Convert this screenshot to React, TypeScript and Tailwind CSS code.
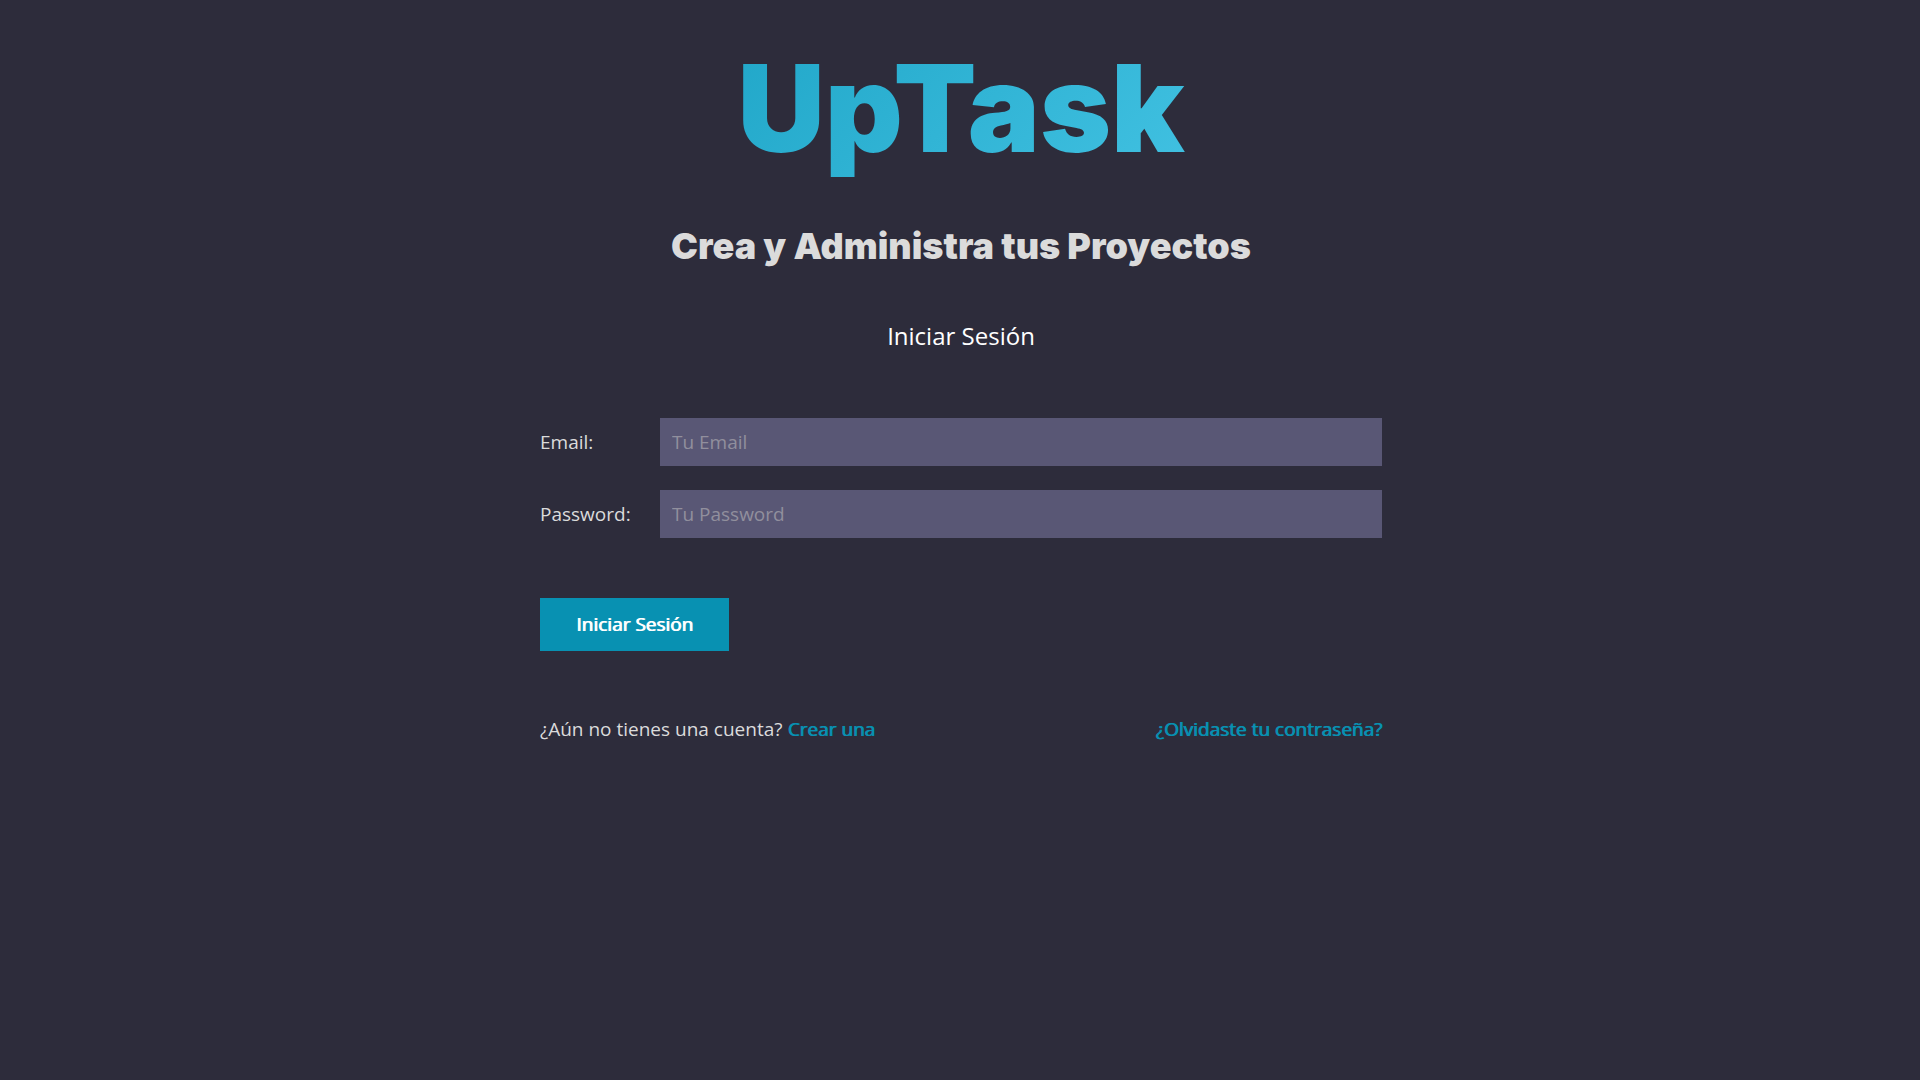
const linkStyle = "text-[#0891b2] [text-shadow:1px_0_currentColor]";

const fields = [
  { id: "email", type: "email", label: "Email:", placeholder: "Tu Email" },
  { id: "password", type: "password", label: "Password:", placeholder: "Tu Password" },
];

export default function App() {
  return (
    <div className="min-h-screen bg-[#2d2c3b] pl-0.5 font-['Open_Sans',sans-serif] text-base text-[#dbdbdb]">
      <main className="mx-auto w-full max-w-[842px] pt-12">
        <header className="text-center font-['Inter',sans-serif] font-black">
          <h1 className="bg-linear-[135deg] from-[#179fc1] to-[#4ccaea] bg-clip-text pb-6 text-[121px] leading-[120px] text-transparent">
            UpTask
          </h1>
          <p className="mt-6 text-4xl leading-[60px]">Crea y Administra tus Proyectos</p>
        </header>
        <p className="mt-10 text-center text-2xl leading-10 text-white">Iniciar Sesión</p>
        <form className="mt-[62px] text-[19px]">
          <div className="flex flex-col gap-6">
            {fields.map((f) => (
              <div key={f.id} className="flex items-center">
                <label htmlFor={f.id} className="w-[120px] shrink-0">
                  {f.label}
                </label>
                <input
                  id={f.id}
                  type={f.type}
                  placeholder={f.placeholder}
                  className="h-12 min-w-0 flex-1 bg-[#595775] px-3 placeholder:text-[#918f9d]"
                />
              </div>
            ))}
          </div>
          <button type="submit" className="mt-15 h-[53px] bg-[#0891b2] px-9 text-white [text-shadow:1px_0_currentColor]">
            Iniciar Sesión
          </button>
        </form>
        <div className="mt-16 flex justify-between text-[19px]">
          <p>
            ¿Aún no tienes una cuenta?{" "}
            <a href="#crear" className={linkStyle}>
              Crear una
            </a>
          </p>
          <a href="#olvide" className={linkStyle}>
            ¿Olvidaste tu contraseña?
          </a>
        </div>
      </main>
    </div>
  );
}
